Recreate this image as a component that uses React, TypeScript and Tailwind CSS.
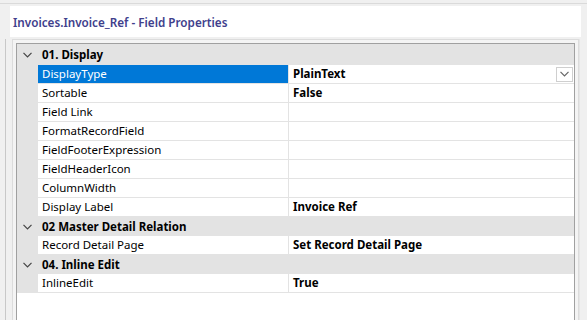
import React from 'react';

type Row = { name: string; value?: string; selected?: boolean; dropdown?: boolean };
type Group = { title: string; rows: Row[] };

const groups: Group[] = [
  {
    title: '01. Display',
    rows: [
      { name: 'DisplayType', value: 'PlainText', selected: true, dropdown: true },
      { name: 'Sortable', value: 'False' },
      { name: 'Field Link' },
      { name: 'FormatRecordField' },
      { name: 'FieldFooterExpression' },
      { name: 'FieldHeaderIcon' },
      { name: 'ColumnWidth' },
      { name: 'Display Label', value: 'Invoice Ref' },
    ],
  },
  {
    title: '02 Master Detail Relation',
    rows: [{ name: 'Record Detail Page', value: 'Set Record Detail Page' }],
  },
  {
    title: '04. Inline Edit',
    rows: [{ name: 'InlineEdit', value: 'True' }],
  },
];

function Chevron({ className = '' }: { className?: string }) {
  return (
    <svg width="9" height="6" viewBox="0 0 9 6" className={className}>
      <path d="M0.5 0.8 L4.5 4.8 L8.5 0.8" fill="none" stroke="currentColor" strokeWidth="1.2" />
    </svg>
  );
}

function GroupHeader({ title, first }: { title: string; first: boolean }) {
  return (
    <div className={`flex items-center bg-[#e3e3e3] ${first ? 'h-[21px]' : 'h-[19px]'}`}>
      <div className="flex w-[21px] justify-center text-[#444]">
        <Chevron />
      </div>
      <div className="pl-1 text-[11.5px] font-bold text-black">{title}</div>
    </div>
  );
}

function PropRow({ row }: { row: Row }) {
  return (
    <div className="flex h-[19px]">
      <div className="w-[21px] shrink-0 bg-[#e3e3e3]" />
      <div
        className={`flex w-[251px] shrink-0 items-center border-r border-b border-[#e3e3e3] pl-1 text-[11.5px] ${
          row.selected ? 'bg-[#0078d7] text-white' : 'bg-white text-black'
        }`}
      >
        {row.name}
      </div>
      <div className="flex flex-1 items-center justify-between border-b border-[#e3e3e3] bg-white pl-1 text-[11.5px] font-bold text-black">
        <span>{row.value}</span>
        {row.dropdown && (
          <div className="mr-px flex h-[15px] w-[17px] items-center justify-center border border-[#cfcfcf] bg-white text-[#666]">
            <Chevron />
          </div>
        )}
      </div>
    </div>
  );
}

export default function App() {
  return (
    <div
      className="relative h-[320px] w-[587px] overflow-hidden bg-[#f0f0f0]"
      style={{ fontFamily: '"Noto Sans", "Liberation Sans", sans-serif' }}
    >
      <div className="h-[4px] border-b border-[#dadada]" />
      <div className="flex pt-[2px]">
        <div className="w-[10px]" />
        <div className="flex h-[31px] flex-1 items-center bg-white pl-[3px] pt-[2px] text-[11.7px] font-semibold text-[#40408c]">
          Invoices.Invoice_Ref - Field Properties
        </div>
        <div className="w-[6px]" />
      </div>
      <div className="flex h-full pt-[2px]">
        <div className="w-[5px]" />
        <div className="w-[7px] border-l border-[#c8c8c8]" />
        <div className="flex flex-1 border-t border-l border-r border-[#dcdcdc] bg-[#f4f4f4] pl-[3px] pt-[3px] pr-[3px]">
          <div className="flex-1 border-t border-l border-r border-[#a0a0a0] bg-white">
            {groups.map((g, i) => (
              <div key={g.title}>
                <GroupHeader title={g.title} first={i === 0} />
                {g.rows.map((r) => (
                  <PropRow key={r.name} row={r} />
                ))}
              </div>
            ))}
          </div>
        </div>
        <div className="w-[8px] border-l border-[#e6e6e6]" />
      </div>
    </div>
  );
}
